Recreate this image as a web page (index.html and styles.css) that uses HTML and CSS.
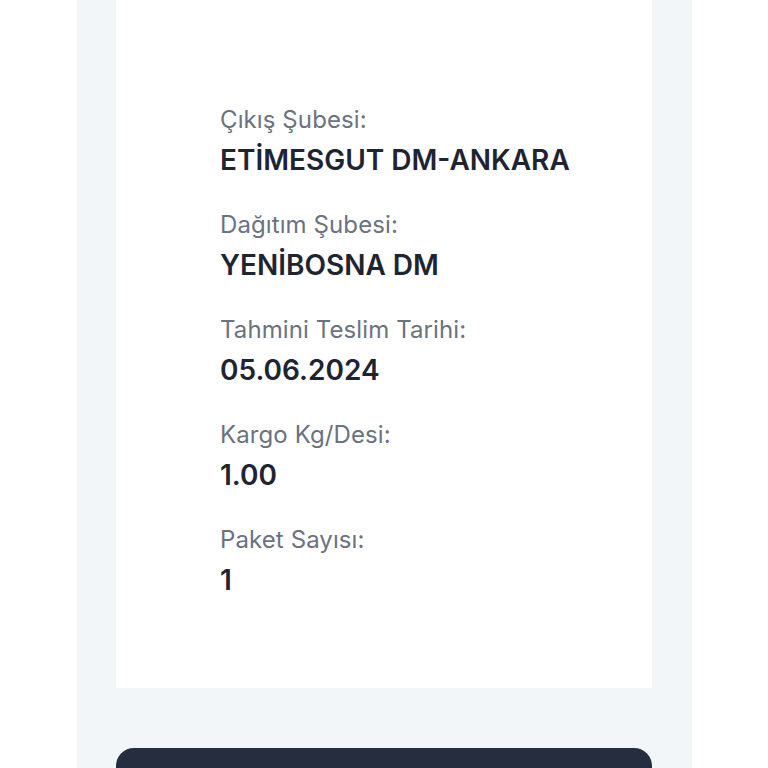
FILE: index.html
```html
<!DOCTYPE html>
<html lang="tr">
<head>
    <meta charset="UTF-8">
    <meta name="viewport" content="width=device-width, initial-scale=1.0">
    <title>Kargo Takip</title>
    <link rel="stylesheet" href="styles.css">
</head>
<body>
    <main class="panel">
        <section class="info-card">
            <div class="info-row">
                <div class="info-label">Çıkış Şubesi:</div>
                <div class="info-value">ETİMESGUT DM-ANKARA</div>
            </div>
            <div class="info-row">
                <div class="info-label">Dağıtım Şubesi:</div>
                <div class="info-value">YENİBOSNA DM</div>
            </div>
            <div class="info-row">
                <div class="info-label">Tahmini Teslim Tarihi:</div>
                <div class="info-value">05.06.2024</div>
            </div>
            <div class="info-row">
                <div class="info-label">Kargo Kg/Desi:</div>
                <div class="info-value">1.00</div>
            </div>
            <div class="info-row">
                <div class="info-label">Paket Sayısı:</div>
                <div class="info-value">1</div>
            </div>
        </section>
        <button class="action-btn" type="button"></button>
    </main>
</body>
</html>
```

FILE: styles.css
```css
:root {
    --panel-bg: #f3f6f9;
    --card-bg: #ffffff;
    --label: #6b7280;
    --value: #1f2433;
    --dark: #252d3e;
}

* {
    margin: 0;
    padding: 0;
    box-sizing: border-box;
}

html, body {
    height: 768px;
    overflow: hidden;
}

body {
    background: #ffffff;
    font-family: Inter, Roboto, sans-serif;
}

.panel {
    width: 615px;
    height: 768px;
    overflow: hidden;
    margin-left: 77px;
    padding: 0 40px 0 39px;
    background: var(--panel-bg);
}

.info-card {
    background: var(--card-bg);
    padding: 104px 20px 90px 104px;
    display: flex;
    flex-direction: column;
    gap: 31px;
}

.info-label {
    font-size: 24px;
    line-height: 32px;
    letter-spacing: 0.1px;
    color: var(--label);
}

.info-value {
    margin-top: 6px;
    font-size: 28px;
    line-height: 36px;
    font-weight: 600;
    color: var(--value);
}

.action-btn {
    display: block;
    width: 100%;
    height: 60px;
    margin-top: 60px;
    border: none;
    border-radius: 18px;
    background: var(--dark);
}
```
